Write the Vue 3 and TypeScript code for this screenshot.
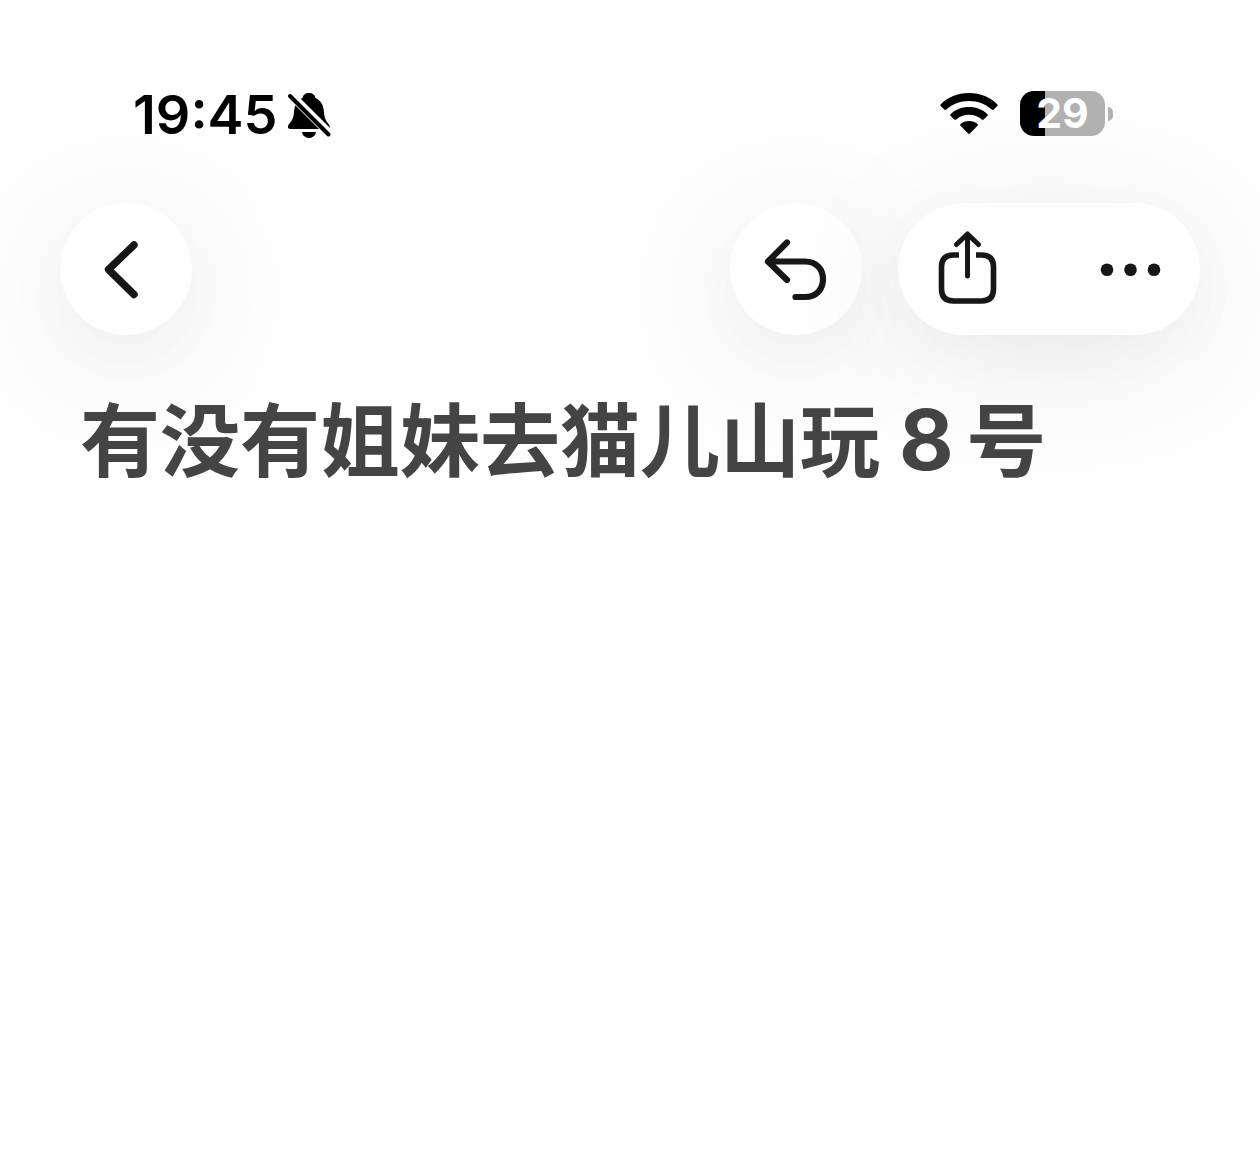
<script setup lang="ts">
import { ref } from 'vue'

const time = ref<string>('19:45')
const battery = ref<number>(29)
</script>

<template>
  <main class="screen">
    <header class="status">
      <div class="clock">
        <time>{{ time }}</time>
        <svg class="bell" width="46" height="50" viewBox="0 0 46 50" role="img" aria-label="Silent mode">
          <path d="M23 3C19.500 3 17 5 16.500 8C10.500 10.500 8.500 16 8 22C7.500 29 5.500 31 3 34C1 37 2 39 5 39H41C44 39 44.500 37 43 34.500C40 31 38.500 29 38 22C37.500 16 35.500 10.500 29.500 8C29 5 26.500 3 23 3Z" />
          <path d="M16 42H30C29.500 45.500 26.500 48 23 48S16.500 45.500 16 42Z" />
          <path d="M1 1L46 46" stroke="#fefefe" stroke-width="8.500" />
          <path d="M4 6L42.500 44.500" stroke="#000" stroke-width="4" stroke-linecap="round" />
        </svg>
      </div>
      <div class="signals">
        <svg width="58" height="44" viewBox="0 0 58 44" role="img" aria-label="Wi-Fi">
          <path d="M29 1C17.500 1 7.500 5.500 .8 12.200C.2 12.800 .2 13.500 .8 14.100L4.300 17.600C4.900 18.200 5.600 18.200 6.200 17.600C12.200 11.900 20.100 8.900 29 8.900S45.800 11.900 51.800 17.600C52.400 18.200 53.100 18.200 53.700 17.600L57.200 14.100C57.800 13.500 57.800 12.800 57.200 12.200C50.500 5.500 40.500 1 29 1Z" />
          <path d="M29 15C21.500 15 15.200 17.700 10.700 22C10.100 22.600 10.100 23.300 10.700 23.900L14.300 27.400C14.900 28 15.600 28 16.200 27.500C19.600 24.400 24 22.800 29 22.800S38.400 24.400 41.800 27.500C42.400 28 43.100 28 43.700 27.400L47.300 23.900C47.900 23.300 47.900 22.600 47.300 22C42.800 17.700 36.500 15 29 15Z" />
          <path d="M29 29C25.600 29 22.700 30.100 20.500 31.900C19.900 32.500 19.900 33.100 20.500 33.700L28.100 41.400C28.700 42 29.300 42 29.900 41.400L37.500 33.700C38.100 33.100 38.100 32.500 37.500 31.900C35.300 30.100 32.400 29 29 29Z" />
        </svg>
        <div class="battery">
          <div class="level" :style="{ '--level': battery + '%' }">{{ battery }}</div>
          <span class="tip"></span>
        </div>
      </div>
    </header>

    <nav class="toolbar">
      <button type="button" class="glass round" aria-label="Back">
        <svg width="132" height="132" viewBox="0 0 132 132">
          <path d="M74 42L48.500 66.500L74 91.500" stroke-width="7.400" />
        </svg>
      </button>
      <div class="actions">
        <button type="button" class="glass round" aria-label="Undo">
          <svg width="132" height="132" viewBox="0 0 132 132">
            <path d="M57 39.500L38 58.500L57 77M38 58.500H75C86.500 58.500 93 66.500 93 76.300S86.500 94 75 94H65.500" stroke-width="6.200" />
          </svg>
        </button>
        <div class="glass group">
          <button type="button" aria-label="Share">
            <svg width="140" height="132" viewBox="0 0 140 132">
              <path d="M69.500 73V33M58.500 41.500L69.500 31L80.500 41.500" stroke-width="5" />
              <path class="butt" d="M61 52H55.500Q43.500 52 43.500 64V86Q43.500 98 55.500 98H83.500Q95.500 98 95.500 86V64Q95.500 52 83.500 52H78" stroke-width="5.600" />
            </svg>
          </button>
          <button type="button" aria-label="More">
            <svg class="dots" width="140" height="132" viewBox="0 0 140 132">
              <circle cx="47" cy="66.800" r="6.300" />
              <circle cx="70.500" cy="66.800" r="6.300" />
              <circle cx="94" cy="66.800" r="6.300" />
            </svg>
          </button>
        </div>
      </div>
    </nav>

    <h1>有没有姐妹去猫儿山玩 <span class="num">8</span>&thinsp;号</h1>
  </main>
</template>

<style>
body {
  margin: 0;
  background: #fefefe;
}
</style>

<style scoped>
.screen {
  min-height: 100vh;
  overflow: hidden;
  background: #fefefe;
  color: #000;
  font-family: Inter, "Noto Sans CJK SC", sans-serif;
}

.status {
  display: flex;
  justify-content: space-between;
  align-items: flex-start;
  box-sizing: border-box;
  height: 144px;
  padding: 84px 147px 0 133px;
}

.clock,
.signals,
.battery,
.actions,
.group {
  display: flex;
  align-items: center;
}

.clock {
  gap: 8px;
  font-size: 54px;
  line-height: 62px;
  font-weight: 600;
}

.signals {
  gap: 22px;
  height: 59px;
}

.battery {
  gap: 3px;
}

.level {
  width: 85px;
  height: 45px;
  border-radius: 14px;
  background: linear-gradient(to right, #000 var(--level), #b1b1b1 var(--level));
  color: #fff;
  font-size: 41px;
  line-height: 45px;
  font-weight: 700;
  text-align: center;
}

.tip {
  width: 5px;
  height: 14px;
  border-radius: 0 7px 7px 0;
  background: #b1b1b1;
}

.toolbar {
  display: flex;
  justify-content: space-between;
  padding: 59px 60px 0;
}

.actions {
  gap: 36px;
}

button {
  display: block;
  padding: 0;
  border: 0;
  background: none;
}

.glass {
  border-radius: 66px;
  background: #fefefe;
  box-shadow: 0 24px 140px rgba(0, 0, 0, 0.08), 0 16px 56px rgba(0, 0, 0, 0.03);
}

.round {
  width: 132px;
  height: 132px;
}

.group {
  justify-content: space-between;
  width: 302px;
}

.toolbar svg {
  display: block;
  fill: none;
  stroke: #171717;
  stroke-linecap: round;
  stroke-linejoin: round;
}

.toolbar .butt {
  stroke-linecap: butt;
}

.toolbar .dots {
  fill: #171717;
  stroke: none;
}

h1 {
  position: relative;
  margin: 0;
  padding: 46px 80px 0;
  color: #444;
  font-size: 80px;
  line-height: 120px;
  font-weight: 700;
}

.num {
  font-size: 84px;
  line-height: 80px;
}
</style>
